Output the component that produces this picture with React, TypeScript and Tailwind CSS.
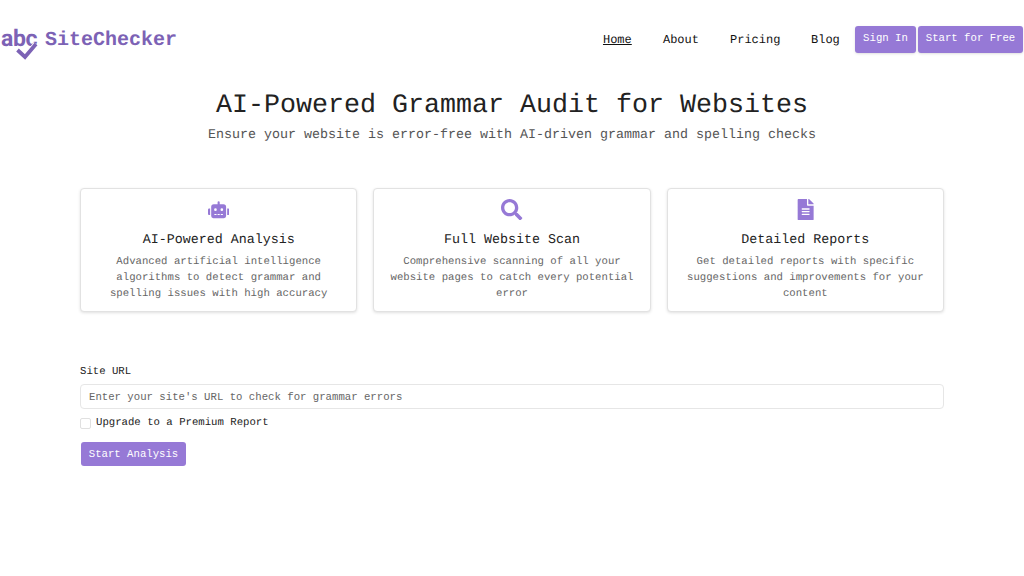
import { FaRobot, FaSearch, FaFileAlt } from "react-icons/fa";

const cards = [
  { Icon: FaRobot, title: "AI-Powered Analysis", text: "Advanced artificial intelligence algorithms to detect grammar and spelling issues with high accuracy" },
  { Icon: FaSearch, title: "Full Website Scan", text: "Comprehensive scanning of all your website pages to catch every potential error" },
  { Icon: FaFileAlt, title: "Detailed Reports", text: "Get detailed reports with specific suggestions and improvements for your content" },
];

function LogoMark() {
  return (
    <span className="relative block h-[34px] w-[38px] shrink-0">
      <span className="absolute left-px top-[5px] font-['Roboto',sans-serif] text-[23px] leading-[23px] font-bold tracking-[-0.4px] text-[#7c62b5]">abc</span>
      <svg className="absolute left-0 top-0" width="38" height="40" viewBox="0 0 38 40" fill="none">
        <path d="M17.5 28 L25 35 L36 22" stroke="#ffffff" strokeWidth="5.5" />
        <path d="M17.5 28 L25 35 L36 22" stroke="#7c62b5" strokeWidth="3.8" />
      </svg>
    </span>
  );
}

export default function App() {
  return (
    <div className="min-h-[576px] bg-white text-[#222222] font-['Liberation_Mono',monospace] [text-rendering:geometricPrecision]">
      <header className="flex h-[78px] items-center justify-between">
        <div className="flex items-center gap-[7px] text-[#7c62b5]">
          <LogoMark />
          <span className="pt-[4px] text-[20px] font-bold">SiteChecker</span>
        </div>
        <nav className="flex items-center pt-0 text-[12px] text-[#111111]">
          <a className="pt-[2px] underline">Home</a>
          <a className="ml-[31.2px] pt-[2px]">About</a>
          <a className="ml-[31px] pt-[2px]">Pricing</a>
          <a className="ml-[30.6px] pt-[2px]">Blog</a>
          <button className="ml-[15.2px] h-[27px] w-[61px] rounded-[3px] bg-[#9679d6] pb-[3px] text-[10.67px] text-white shadow-sm">Sign In</button>
          <button className="ml-[2px] mr-px h-[27px] w-[105px] rounded-[3px] bg-[#9679d6] pb-[3px] text-[10.67px] text-white shadow-sm">Start for Free</button>
        </nav>
      </header>
      <main className="px-[80px]">
        <h1 className="mt-[13px] text-center text-[26.67px] leading-[30px] font-normal">AI-Powered Grammar Audit for Websites</h1>
        <p className="mt-[7px] text-center text-[13.33px] leading-[16px] text-[#555555]">Ensure your website is error-free with AI-driven grammar and spelling checks</p>
        <div className="mt-[44px] grid grid-cols-3 gap-[16px]">
          {cards.map(({ Icon, title, text }) => (
            <div key={title} className="flex h-[124px] flex-col items-center rounded-[4px] border border-[#e2e2e2] bg-white px-[15px] pt-[10px] text-center shadow-[0_1px_3px_rgba(0,0,0,0.12)]">
              <Icon className="text-[21.3px] text-[#9679d6]" />
              <h3 className="mt-[13px] text-[13.33px] leading-[16px] font-normal text-[#222222]">{title}</h3>
              <p className="mt-[5px] text-[10.67px] leading-[16px] text-[#666666]">{text}</p>
            </div>
          ))}
        </div>
        <label className="mt-[54px] block text-[10.67px] leading-[12px] text-[#222222]">Site URL</label>
        <input
          readOnly
          placeholder="Enter your site's URL to check for grammar errors"
          className="mt-[6px] block h-[25px] w-full rounded-[4px] border border-[#e6e6e6] bg-white px-[8px] text-[10.67px] placeholder:text-[#666666]"
        />
        <label className="mt-[8px] flex items-center gap-[5px] text-[10.67px] leading-[12px] text-[#222222]">
          <span className="h-[11px] w-[11px] rounded-[2px] border border-[#e0e0e0] bg-white" />
          Upgrade to a Premium Report
        </label>
        <button className="ml-px mt-[13px] block h-[24px] w-[105px] rounded-[3px] bg-[#9679d6] text-[10.67px] text-white">Start Analysis</button>
      </main>
    </div>
  );
}
